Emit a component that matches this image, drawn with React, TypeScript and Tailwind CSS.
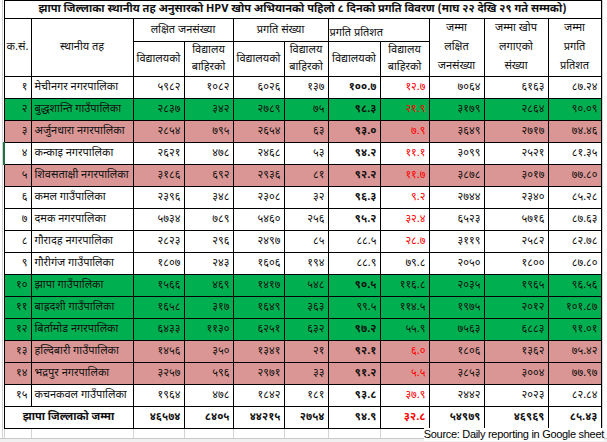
import * as React from 'react';

type Row = {
  sn: string;
  name: string;
  vals: string[];
  tone: 'white' | 'green' | 'pink';
  bold: boolean;
  red: boolean;
};

// values: target school, target outside, done school, done outside, % school, % outside, total target, total done, total %
const rows: Row[] = [
  { sn: '१', name: 'मेचीनगर नगरपालिका', vals: ['५९८२', '१०८२', '६०२६', '१३७', '१००.७', '१२.७', '७०६४', '६१६३', '८७.२४'], tone: 'white', bold: true, red: true },
  { sn: '२', name: 'बुद्धशान्ति गाउँपालिका', vals: ['२८३७', '३४२', '२७८९', '७५', '९८.३', '२१.९', '३१७९', '२८६४', '९०.०९'], tone: 'green', bold: true, red: true },
  { sn: '३', name: 'अर्जुनधारा नगरपालिका', vals: ['२८५४', '७९५', '२६५४', '६३', '९३.०', '७.९', '३६४९', '२७१७', '७४.४६'], tone: 'pink', bold: true, red: true },
  { sn: '४', name: 'कन्काइ नगरपालिका', vals: ['२६२१', '४७८', '२४६८', '५३', '९४.२', '११.१', '३०९९', '२५२१', '८१.३५'], tone: 'white', bold: true, red: true },
  { sn: '५', name: 'शिवसताक्षी नगरपालिका', vals: ['३१८६', '६९२', '२९३६', '८१', '९२.२', '११.७', '३८७८', '३०१७', '७७.८०'], tone: 'pink', bold: true, red: true },
  { sn: '६', name: 'कमल गाउँपालिका', vals: ['२३९६', '३४८', '२३०८', '३२', '९६.३', '९.२', '२७४४', '२३४०', '८५.२८'], tone: 'white', bold: true, red: true },
  { sn: '७', name: 'दमक नगरपालिका', vals: ['५७३४', '७८९', '५४६०', '२५६', '९५.२', '३२.४', '६५२३', '५७१६', '८७.६३'], tone: 'white', bold: true, red: true },
  { sn: '८', name: 'गौरादह नगरपालिका', vals: ['२८२३', '२९६', '२४९७', '८५', '८८.५', '२८.७', '३११९', '२५८२', '८२.७८'], tone: 'white', bold: false, red: true },
  { sn: '९', name: 'गाैरीगंज गाउँपालिका', vals: ['१८०७', '२४३', '१६०६', '१९४', '८८.९', '७९.८', '२०५०', '१८००', '८७.८०'], tone: 'white', bold: false, red: false },
  { sn: '१०', name: 'झापा गाउँपालिका', vals: ['१५६६', '४६९', '१४१७', '५४८', '९०.५', '११६.८', '२०३५', '१९६५', '९६.५६'], tone: 'green', bold: true, red: false },
  { sn: '११', name: 'बाह्रदशी गाउँपालिका', vals: ['१६५८', '३१७', '१६४९', '३६३', '९९.५', '११४.५', '१९७५', '२०१२', '१०१.८७'], tone: 'green', bold: false, red: false },
  { sn: '१२', name: 'बिर्तामोड नगरपालिका', vals: ['६४३३', '११३०', '६२५१', '६३२', '९७.२', '५५.९', '७५६३', '६८८३', '९१.०१'], tone: 'green', bold: true, red: false },
  { sn: '१३', name: 'हल्दिबारी गाउँपालिका', vals: ['१४५६', '३५०', '१३४१', '२१', '९२.१', '६.०', '१८०६', '१३६२', '७५.४२'], tone: 'pink', bold: true, red: true },
  { sn: '१४', name: 'भद्रपुर नगरपालिका', vals: ['३२५७', '५९६', '२९७१', '३३', '९१.२', '५.५', '३८५३', '३००४', '७७.९७'], tone: 'pink', bold: true, red: true },
  { sn: '१५', name: 'कचनकवल गाउँपालिका', vals: ['१९६४', '४७८', '१८४२', '१८१', '९३.८', '३७.९', '२४४२', '२०२३', '८२.८४'], tone: 'white', bold: true, red: true },
];

const totals = ['४६५७४', '८४०५', '४४२१५', '२७५४', '९४.९', '३२.८', '५४९७९', '४६९६९', '८५.४३'];

const toneBg = {
  white: 'bg-white',
  green: 'bg-[#00b050]',
  pink: 'bg-[#da9694]',
};

const cell = 'border border-black px-[3px] leading-none whitespace-nowrap';
const head = 'border border-black px-[2px] font-normal leading-[19px] text-center align-middle';
const head2 = 'border border-black px-[1px] font-normal leading-[17px] text-center';

export default function App() {
  return (
    <div
      className="relative w-[607px] h-[442px] overflow-hidden bg-white text-[11px] text-[#111]"
      style={{ fontFamily: '"Noto Sans Devanagari", "Lohit Devanagari", Mangal, "Noto Sans", sans-serif' }}
    >
      <div className="flex">
        <div className="w-[3px] shrink-0 border-r border-[#d4d4d4]" />
        <table className="border-collapse table-fixed w-[597px] shrink-0">
          <colgroup>
            <col className="w-[27px]" />
            <col className="w-[102px]" />
            <col className="w-[51px]" />
            <col className="w-[49px]" />
            <col className="w-[51px]" />
            <col className="w-[44px]" />
            <col className="w-[52px]" />
            <col className="w-[49px]" />
            <col className="w-[55px]" />
            <col className="w-[64px]" />
            <col className="w-[53px]" />
          </colgroup>
          <thead>
            <tr className="h-[18px]">
              <th colSpan={11} className="border border-black font-bold text-[11px] leading-none text-center whitespace-nowrap overflow-hidden">
                झापा जिल्लाका स्थानीय तह अनुसारको HPV खोप अभियानको पहिलो ८ दिनको प्रगति विवरण (माघ २२ देखि २९ गते सम्मको)
              </th>
            </tr>
            <tr className="h-[23px]">
              <th rowSpan={2} className={head}>क.सं.</th>
              <th rowSpan={2} className={head}>स्थानीय तह</th>
              <th colSpan={2} className={head}>लक्षित जनसंख्या</th>
              <th colSpan={2} className={head}>प्रगति संख्या</th>
              <th colSpan={2} className="border border-black px-[1px] font-normal leading-none text-left align-bottom pb-[2px]">प्रगति प्रतिशत</th>
              <th rowSpan={2} className={head}>जम्मा<br />लक्षित<br />जनसंख्या</th>
              <th rowSpan={2} className={head}>जम्मा खोप<br />लगाएको<br />संख्या</th>
              <th rowSpan={2} className={head}>जम्मा<br />प्रगति<br />प्रतिशत</th>
            </tr>
            <tr className="h-[35px]">
              <th className={head}>विद्यालयको</th>
              <th className={head2}>विद्यालय<br />बाहिरको</th>
              <th className={head}>विद्यालयको</th>
              <th className={head2}>विद्यालय<br />बाहिरको</th>
              <th className={head}>विद्यालयको</th>
              <th className={head2}>विद्यालय<br />बाहिरको</th>
            </tr>
          </thead>
          <tbody>
            {rows.map((r, i) => (
              <tr key={r.sn} className={`h-[22px] ${toneBg[r.tone]}`}>
                <td className={`${cell} text-right ${i === 3 ? 'border-l-2 border-l-[#217346]' : ''}`}>{r.sn}</td>
                <td className={`${cell} text-left`}>{r.name}</td>
                {r.vals.map((v, j) => (
                  <td
                    key={j}
                    className={`${cell} text-right ${j === 4 && r.bold ? 'font-bold' : ''} ${j === 5 && r.red ? 'text-[#ff0000]' : ''}`}
                  >
                    {v}
                  </td>
                ))}
              </tr>
            ))}
            <tr className="h-[22px] bg-white font-bold">
              <td colSpan={2} className={`${cell} text-center`}>झापा जिल्लाको जम्मा</td>
              {totals.map((v, j) => (
                <td key={j} className={`${cell} text-right ${j === 5 ? 'text-[#ff0000]' : ''}`}>{v}</td>
              ))}
            </tr>
            <tr className="h-[9px]">
              {Array.from({ length: 11 }).map((_, j) => (
                <td key={j} className="border-x border-[#d4d4d4]" />
              ))}
            </tr>
          </tbody>
        </table>
        <div className="flex-1 border-l border-[#d4d4d4]" />
      </div>
      <div className="h-[10px] bg-[#f0f0f0] border-t border-[#c8c8c8]" />
      <div
        className="absolute right-[3px] top-[428px] text-[11px] leading-[13px] tracking-[-0.3px] whitespace-nowrap bg-white text-black"
        style={{ fontFamily: '"Liberation Sans", Arial, sans-serif' }}
      >
        Source: Daily reporting in Google sheet
      </div>
    </div>
  );
}
